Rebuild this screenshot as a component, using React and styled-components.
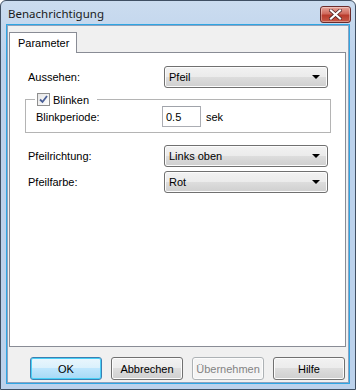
import styled, { createGlobalStyle } from "styled-components";

const Global = createGlobalStyle`
  html, body {
    margin: 0;
    padding: 0;
    background: #fff;
  }
  * {
    box-sizing: border-box;
  }
`;

const Window = styled.div`
  width: 356px;
  height: 390px;
  display: flex;
  flex-direction: column;
  border: 1px solid #3f4f63;
  border-radius: 6px 6px 0 0;
  background: linear-gradient(#cbdcef, #bcd2ec 60px, #bcd2ec);
  font-family: "Liberation Sans", Arial, sans-serif;
  font-size: 11px;
  color: #000;
`;

const TitleBar = styled.div`
  height: 24px;
  display: flex;
  align-items: center;
  justify-content: space-between;
  padding: 0 4px 0 7px;
`;

const Title = styled.span`
  font-family: "Noto Sans", "DejaVu Sans", sans-serif;
  font-size: 11.5px;
  color: #1a1a1a;
`;

const CloseButton = styled.div`
  width: 31px;
  height: 17px;
  margin-top: 2px;
  border: 1px solid #6b2c2c;
  border-radius: 3px;
  background: linear-gradient(#e6a49a, #cf6a5d 45%, #b93b2c 55%, #c65a48);
  display: flex;
  align-items: center;
  justify-content: center;
  box-shadow: inset 0 0 0 1px rgba(255, 255, 255, 0.35);
`;

const Client = styled.div`
  flex: 1;
  margin: 0 6px 6px;
  background: #f0f0f0;
  border: 1px solid #8da2bf;
  display: flex;
  flex-direction: column;
  padding: 6px 2px 0 1px;
  box-shadow: 0 0 0 1px #2fa6e3;
`;

const TabStrip = styled.div`
  display: flex;
  height: 20px;
`;

const Tab = styled.div`
  padding: 4px 7px 0 8px;
  height: 21px;
  background: #fff;
  border: 1px solid #898c95;
  border-bottom: none;
  position: relative;
  z-index: 1;
`;

const Panel = styled.div`
  height: 295px;
  background: #fff;
  border: 1px solid #898c95;
  padding: 13px 15px 0 18px;
  display: flex;
  flex-direction: column;
`;

const Row = styled.div`
  display: flex;
  align-items: center;
  height: 22px;
  margin-bottom: ${(p) => p.$gap || 0}px;
`;

const Label = styled.span`
  width: ${(p) => p.$w || 136}px;
`;

const Select = styled.div`
  width: 164px;
  height: 22px;
  border: 1px solid #707070;
  border-radius: 3px;
  background: linear-gradient(#f2f2f2, #ebebeb 50%, #dddddd 50%, #cfcfcf);
  display: flex;
  align-items: center;
  justify-content: space-between;
  padding: 0 7px 0 4px;
  box-shadow: inset 0 0 0 1px #fcfcfc;
`;

const Arrow = styled.span`
  width: 0;
  height: 0;
  border-left: 4px solid transparent;
  border-right: 4px solid transparent;
  border-top: 4px solid #000;
`;

const Group = styled.fieldset`
  margin: 5px 0 12px -3px;
  padding: 0 0 4px 10px;
  border: 1px solid #b4b4b4;
  border-radius: 0;
  width: 306px;
  height: 40px;
  display: flex;
  align-items: center;
`;

const Legend = styled.legend`
  display: flex;
  align-items: center;
  gap: 3px;
  padding: 0 8px 0 2px;
  margin-left: -1px;
`;

const Check = styled.span`
  width: 13px;
  height: 13px;
  border: 1px solid #8f8f8f;
  background: linear-gradient(135deg, #e6e6e6, #fdfdfd);
  display: flex;
  align-items: center;
  justify-content: center;
`;

const NumInput = styled.div`
  width: 39px;
  height: 21px;
  border: 1px solid #abadb3;
  border-top-color: #a0a3aa;
  background: #fff;
  display: flex;
  align-items: center;
  padding-left: 3px;
  margin-left: -1px;
`;

const Unit = styled.span`
  margin-left: 5px;
`;

const Buttons = styled.div`
  display: flex;
  justify-content: flex-end;
  gap: 9px;
  padding: 10px 1px 0 0;
`;

const Button = styled.div`
  width: 72px;
  height: 23px;
  border: 1px solid ${(p) => (p.$default ? "#3c7fb1" : p.$disabled ? "#adb2b5" : "#707070")};
  border-radius: 3px;
  background: ${(p) =>
    p.$disabled
      ? "#f4f4f4"
      : p.$default
      ? "linear-gradient(#eaf6fd, #d9f0fc 50%, #bee6fd 50%, #a7d9f5)"
      : "linear-gradient(#f2f2f2, #ebebeb 50%, #dddddd 50%, #cfcfcf)"};
  box-shadow: inset 0 0 0 1px ${(p) => (p.$default ? "#48d0f7" : "#fcfcfc")};
  color: ${(p) => (p.$disabled ? "#838383" : "#000")};
  display: flex;
  align-items: center;
  justify-content: center;
`;

export default function App() {
  return (
    <>
      <Global />
      <Window>
        <TitleBar>
          <Title>Benachrichtigung</Title>
          <CloseButton>
            <svg width="13" height="11" viewBox="0 0 13 11">
              <path
                d="M2 1.5 L11 9.5 M11 1.5 L2 9.5"
                stroke="#4a2020"
                strokeWidth="3.6"
                strokeLinecap="square"
              />
              <path
                d="M2 1.5 L11 9.5 M11 1.5 L2 9.5"
                stroke="#fff"
                strokeWidth="2.2"
                strokeLinecap="square"
              />
            </svg>
          </CloseButton>
        </TitleBar>
        <Client>
          <TabStrip>
            <Tab>Parameter</Tab>
          </TabStrip>
          <Panel>
            <Row>
              <Label>Aussehen:</Label>
              <Select>
                Pfeil
                <Arrow />
              </Select>
            </Row>
            <Group>
              <Legend>
                <Check>
                  <svg width="9" height="9" viewBox="0 0 9 9">
                    <path d="M1 4.5 L3.5 7 L8 1" fill="none" stroke="#4a5f97" strokeWidth="1.8" />
                  </svg>
                </Check>
                Blinken
              </Legend>
              <Label $w={127}>Blinkperiode:</Label>
              <NumInput>0.5</NumInput>
              <Unit>sek</Unit>
            </Group>
            <Row $gap={4}>
              <Label>Pfeilrichtung:</Label>
              <Select>
                Links oben
                <Arrow />
              </Select>
            </Row>
            <Row>
              <Label>Pfeilfarbe:</Label>
              <Select>
                Rot
                <Arrow />
              </Select>
            </Row>
          </Panel>
          <Buttons>
            <Button $default>OK</Button>
            <Button>Abbrechen</Button>
            <Button $disabled>Übernehmen</Button>
            <Button>Hilfe</Button>
          </Buttons>
        </Client>
      </Window>
    </>
  );
}
